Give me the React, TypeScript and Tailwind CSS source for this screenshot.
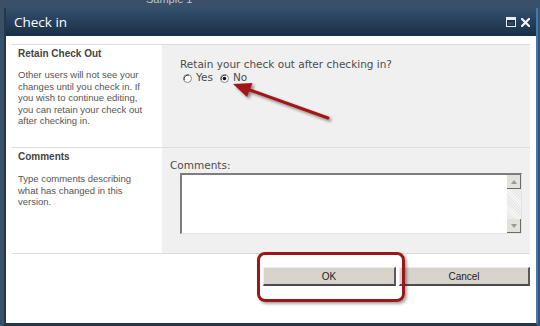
import React from 'react'

const sans = { fontFamily: '"Liberation Sans", Arial, sans-serif' }
const verdana = { fontFamily: '"DejaVu Sans", Verdana, sans-serif' }

function Radio({ checked }: { checked?: boolean }) {
  return (
    <svg width="9" height="9" viewBox="0 0 9 9" className="shrink-0">
      <circle cx="4.5" cy="4.5" r="4" fill="#ffffff" stroke="#8a8a8a" strokeWidth="1" />
      <path d="M1.2 6 A4 4 0 0 1 6 1.2" fill="none" stroke="#404040" strokeWidth="1" />
      {checked && <circle cx="4.5" cy="4.5" r="1.8" fill="#111111" />}
    </svg>
  )
}

function TitleIcons() {
  return (
    <div className="flex items-center gap-[5px] pr-[6px]">
      {/* maximize */}
      <svg width="10" height="10" viewBox="0 0 10 10">
        <rect x="0.5" y="0.5" width="9" height="9" fill="#1d2f44" stroke="#e8eef4" strokeWidth="1" />
        <rect x="1" y="1" width="8" height="2" fill="#e8eef4" />
        <rect x="2" y="5" width="6" height="3" fill="#33485e" />
      </svg>
      {/* close */}
      <svg width="9" height="9" viewBox="0 0 9 9">
        <path d="M1 1 L8 8 M8 1 L1 8" stroke="#f2f5f8" strokeWidth="2.2" strokeLinecap="square" />
      </svg>
    </div>
  )
}

function Overlay() {
  return (
    <svg className="absolute left-0 top-0 pointer-events-none" width="540" height="326" viewBox="0 0 540 326">
      <defs>
        <filter id="sh" x="-20%" y="-20%" width="140%" height="140%">
          <feGaussianBlur in="SourceAlpha" stdDeviation="1.4" />
          <feOffset dx="1.5" dy="2" result="b" />
          <feComponentTransfer>
            <feFuncA type="linear" slope="0.45" />
          </feComponentTransfer>
          <feMerge>
            <feMergeNode />
            <feMergeNode in="SourceGraphic" />
          </feMerge>
        </filter>
      </defs>
      <g filter="url(#sh)">
        <line x1="328" y1="118" x2="247" y2="89" stroke="#a11818" strokeWidth="3" strokeLinecap="round" />
        <polygon points="233,84 252.5,83 247,97" fill="#a11818" />
      </g>
    </svg>
  )
}

export default function App() {
  return (
    <div className="relative w-[540px] h-[326px] overflow-hidden bg-[#3a5068] flex flex-col" style={sans}>
      {/* page behind the dialog */}
      <div className="h-[8px] overflow-hidden relative">
        <span className="absolute left-[146px] top-[-9px] text-[11px] text-[#b9c6d3]">Sample 1</span>
      </div>

      <div className="ml-[4px] w-[534px] flex-1 flex flex-col border-l-2 border-r-2 border-b-[3px] border-l-[#25374b] border-r-[#3f7cb4] border-b-[#22364c]">
        {/* title bar */}
        <div className="h-[28px] flex items-center justify-between bg-gradient-to-b from-[#34506d] to-[#1a2f46]">
          <span className="pl-[8px] text-[13.5px] text-white" style={{ fontFamily: '"Open Sans", sans-serif' }}>Check in</span>
          <TitleIcons />
        </div>

        {/* body */}
        <div className="flex-1 bg-white px-[6px] pt-[8px]">
          <div className="border-t border-[#dcdcdc]">
            {/* row 1 */}
            <div className="flex h-[103px] border-b border-[#dcdcdc]">
              <div className="w-[150px] pl-[6px] pt-[3px]">
                <div className="text-[10px] leading-[12px] font-bold text-[#444]">Retain Check Out</div>
                <div className="mt-[9px] text-[9.5px] leading-[11.6px] text-[#555]">
                  Other users will not see your<br />
                  changes until you check in. If<br />
                  you wish to continue editing,<br />
                  you can retain your check out<br />
                  after checking in.
                </div>
              </div>
              <div className="flex-1 bg-[#f0f0f0] pl-[18px] pt-[13px]" style={verdana}>
                <div className="text-[10.5px] leading-[13px] text-[#4c4c4c]">Retain your check out after checking in?</div>
                <div className="flex items-center h-[14px] pl-[3px] text-[10.5px] text-[#4c4c4c]">
                  <Radio />
                  <span className="ml-[4px]">Yes</span>
                  <span className="ml-[7px]"><Radio checked /></span>
                  <span className="ml-[4px]">No</span>
                </div>
              </div>
            </div>

            {/* row 2 */}
            <div className="flex h-[106px] border-b border-[#dcdcdc]">
              <div className="w-[150px] pl-[6px] pt-[3px]">
                <div className="text-[10px] leading-[12px] font-bold text-[#444]">Comments</div>
                <div className="mt-[10px] text-[9.5px] leading-[11.6px] text-[#555]">
                  Type comments describing<br />
                  what has changed in this<br />
                  version.
                </div>
              </div>
              <div className="flex-1 bg-[#f0f0f0] pl-[8px] pt-[11px]" style={verdana}>
                <div className="text-[10.5px] leading-[13px] text-[#4c4c4c]">Comments:</div>
                <div className="ml-[10px] mt-[1px] w-[342px] h-[61px] flex bg-white border-t-2 border-l-2 border-b border-r border-t-[#7c7c7c] border-l-[#7c7c7c] border-b-[#e4e4e4] border-r-[#e4e4e4]">
                  <div className="flex-1" />
                  <div className="w-[14px] flex flex-col bg-[#ecebe8]">
                    <div className="h-[14px] flex items-center justify-center bg-[#e4e2dc] border-r border-b border-[#6a6a6a]">
                      <svg width="6" height="4" viewBox="0 0 6 4"><polygon points="3,0 6,4 0,4" fill="#9a9a9a" /></svg>
                    </div>
                    <div className="flex-1 bg-[repeating-linear-gradient(45deg,#e8e8e8_0px,#e8e8e8_1px,#f6f6f6_1px,#f6f6f6_2px)]" />
                    <div className="h-[14px] flex items-center justify-center bg-[#e4e2dc] border-r border-b border-[#6a6a6a]">
                      <svg width="6" height="4" viewBox="0 0 6 4"><polygon points="0,0 6,0 3,4" fill="#9a9a9a" /></svg>
                    </div>
                  </div>
                </div>
              </div>
            </div>

            {/* buttons */}
            <div className="flex justify-end gap-[3px] mt-[13px]">
              <button className="w-[133px] h-[19px] bg-[#d8d4cd] border-t border-l border-t-[#eeece8] border-l-[#eeece8] border-b-2 border-r-2 border-b-[#4a4a4a] border-r-[#5a5a5a] text-[10px] text-[#222]">OK</button>
              <button className="w-[131px] h-[19px] bg-[#d8d4cd] border-t border-l border-t-[#eeece8] border-l-[#eeece8] border-b-2 border-r-2 border-b-[#4a4a4a] border-r-[#5a5a5a] text-[10px] text-[#222]">Cancel</button>
            </div>
          </div>
        </div>
      </div>

      {/* annotation: highlight box around OK */}
      <div className="absolute left-[257px] top-[252px] w-[148px] h-[50px] rounded-[8px] border-[3px] border-[#9b1717] shadow-[2px_2px_3px_rgba(0,0,0,0.35)] pointer-events-none" />
      <Overlay />
    </div>
  )
}
